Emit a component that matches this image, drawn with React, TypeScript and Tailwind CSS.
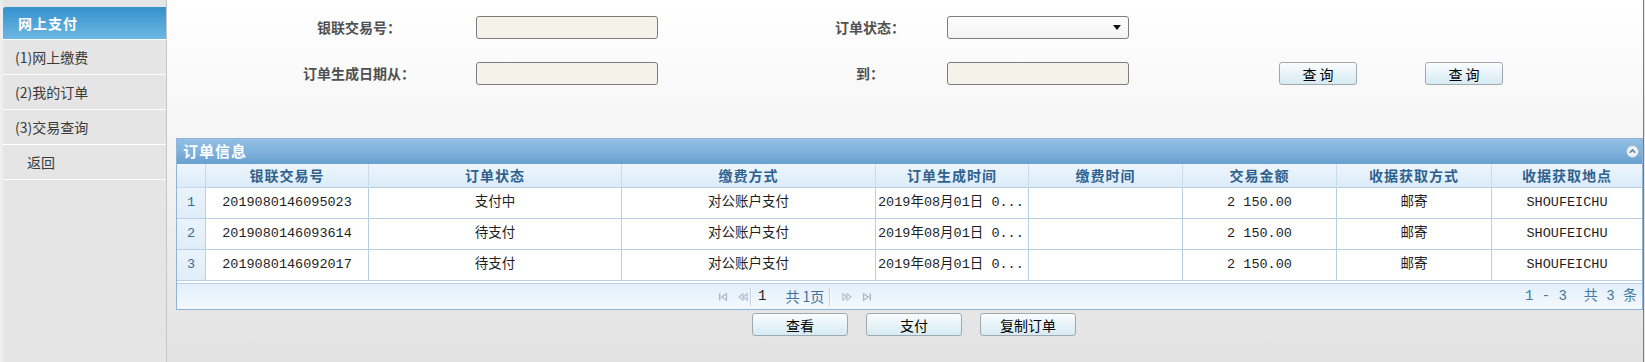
import React from "react";

const cols = [
  "银联交易号",
  "订单状态",
  "缴费方式",
  "订单生成时间",
  "缴费时间",
  "交易金额",
  "收据获取方式",
  "收据获取地点",
];

const rows = [
  { no: "2019080146095023", status: "支付中" },
  { no: "2019080146093614", status: "待支付" },
  { no: "2019080146092017", status: "待支付" },
];

const PagerIcon: React.FC<{ kind: "first" | "prev" | "next" | "last" }> = ({ kind }) => {
  const flip = kind === "next" || kind === "last";
  return (
    <svg width="10" height="8" viewBox="0 0 10 8" className={flip ? "-scale-x-100" : ""}>
      {kind === "first" || kind === "last" ? (
        <>
          <rect x="1" y="0.5" width="1.4" height="7" fill="#a9b6c2" />
          <path d="M8.5 0.8 L3.6 4 L8.5 7.2 Z" fill="none" stroke="#a9b6c2" strokeWidth="1.2" />
        </>
      ) : (
        <>
          <path d="M5 0.8 L1 4 L5 7.2 Z" fill="none" stroke="#b3bfca" strokeWidth="1.1" />
          <path d="M9.2 0.8 L5.2 4 L9.2 7.2 Z" fill="none" stroke="#b3bfca" strokeWidth="1.1" />
        </>
      )}
    </svg>
  );
};

const Sep = () => <div className="w-[2px] h-[18px] border-l border-[#c3d2df] bg-white/70" />;

const Btn: React.FC<{ children: React.ReactNode; className?: string }> = ({ children, className }) => (
  <button
    className={`h-[23px] border border-[#a2a9ad] rounded-[3px] bg-gradient-to-b from-[#f9fdff] to-[#d6eaf3] text-[14px] leading-none text-black ${className ?? ""}`}
  >
    {children}
  </button>
);

export default function App() {
  return (
    <div className="flex w-[1645px] h-[362px] overflow-hidden bg-[#e4e4e4] font-['Noto_Sans_CJK_SC',sans-serif]">
      {/* sidebar */}
      <aside className="w-[167px] shrink-0 h-full bg-[#e5e5e5] border-l-[3px] border-l-[#eeeeee] border-r border-r-[#c6c6c6] pt-[7px]">
        <div className="h-[33px] rounded-tl-[3px] border-b border-white bg-gradient-to-b from-[#3391cc] to-[#6cb7e3] pl-[15px] flex items-center text-[14px] font-bold tracking-[1px] text-white">
          网上支付
        </div>
        {["(1)网上缴费", "(2)我的订单", "(3)交易查询"].map((t) => (
          <div key={t} className="h-[35px] border-b border-white flex items-center pl-[12px] text-[14px] text-[#3a3a3a]">
            {t}
          </div>
        ))}
        <div className="h-[35px] border-b border-white flex items-center pl-[24px] text-[14px] text-[#3a3a3a]">返回</div>
      </aside>

      {/* main */}
      <main className="w-[1477px] shrink-0 h-full border-r border-r-[#4f86bd] bg-gradient-to-b from-white via-[#f2f2f2] to-[#e2e2e2]">
        <div className="h-[138px] pt-[16px] text-[14px]">
          <div className="flex items-center h-[23px]">
            <div className="ml-[112px] w-[160px] text-center font-bold text-[#505050]">银联交易号：</div>
            <input readOnly className="ml-[37px] w-[182px] h-[23px] border border-[#7d7d7d] rounded-[3px] bg-[#f4f3ea]" />
            <div className="ml-[142px] w-[140px] text-center font-bold text-[#505050]">订单状态：</div>
            <div className="ml-[7px] w-[182px] h-[23px] border border-[#7d7d7d] rounded-[3px] bg-gradient-to-b from-white to-[#f3f3f3] flex items-center justify-end pr-[7px]">
              <svg width="8" height="5" viewBox="0 0 8 5">
                <path d="M0 0 H8 L4 5 Z" fill="#111" />
              </svg>
            </div>
          </div>
          <div className="flex items-center h-[23px] mt-[23px]">
            <div className="ml-[112px] w-[160px] text-center font-bold text-[#505050]">订单生成日期从：</div>
            <input readOnly className="ml-[37px] w-[182px] h-[23px] border border-[#7d7d7d] rounded-[3px] bg-[#f4f3ea]" />
            <div className="ml-[142px] w-[140px] text-center font-bold text-[#505050]">到：</div>
            <input readOnly className="ml-[7px] w-[182px] h-[23px] border border-[#7d7d7d] rounded-[3px] bg-[#f4f3ea]" />
            <Btn className="ml-[150px] w-[78px]">查 询</Btn>
            <Btn className="ml-[68px] w-[78px]">查 询</Btn>
          </div>
        </div>

        {/* grid panel */}
        <div className="ml-[9px] w-[1467px] border border-[#8fb4d7] bg-white">
          <div className="h-[25px] flex items-center justify-between pl-[6px] pr-[3px] bg-gradient-to-b from-[#93c0e3] via-[#7eb1dc] to-[#6aa0cf]">
            <span className="text-[15px] font-bold tracking-[1px] text-white">订单信息</span>
            <svg width="13" height="13" viewBox="0 0 13 13">
              <circle cx="6.5" cy="6.5" r="6" fill="#eef3f8" stroke="#9bb8d3" strokeWidth="0.8" />
              <path d="M3.8 7.8 L6.5 5 L9.2 7.8" fill="none" stroke="#5f7f9e" strokeWidth="1.6" />
            </svg>
          </div>
          <div className="grid grid-cols-[29px_163px_253px_254px_153px_154px_154px_155px_150px]">
            <div className="h-[24px] border-r border-b border-[#c3d8ec] bg-gradient-to-b from-[#eef6fd] to-[#dbebf8]" />
            {cols.map((c, i) => (
              <div
                key={c}
                className={`h-[24px] flex items-center justify-center border-b border-[#b7cfe5] bg-gradient-to-b from-[#eef6fd] to-[#dbebf8] text-[14px] font-bold tracking-[1px] text-[#2f618f] ${i < cols.length - 1 ? "border-r border-r-[#c9dcee]" : ""}`}
              >
                {c}
              </div>
            ))}
            {rows.map((r, i) => {
              const cell = "h-[31px] flex items-center border-b border-[#b9cfe3] text-[13.5px] text-[#1e1e1e] font-['Liberation_Mono','Noto_Sans_CJK_SC',monospace]";
              return (
                <React.Fragment key={r.no}>
                  <div className={`${cell} justify-center border-r bg-gradient-to-b from-[#eaf3fb] to-[#e0edf8] text-[#3b6c9a]`}>{i + 1}</div>
                  <div className={`${cell} justify-center border-r`}>{r.no}</div>
                  <div className={`${cell} justify-center border-r`}>{r.status}</div>
                  <div className={`${cell} justify-center border-r`}>对公账户支付</div>
                  <div className={`${cell} pl-[2px] border-r whitespace-nowrap`}>2019年08月01日 0...</div>
                  <div className={`${cell} border-r`} />
                  <div className={`${cell} justify-center border-r`}>2 150.00</div>
                  <div className={`${cell} justify-center border-r`}>邮寄</div>
                  <div className={`${cell} justify-center`}>SHOUFEICHU</div>
                </React.Fragment>
              );
            })}
          </div>
          <div className="h-[2px] bg-white" />
          <div className="h-[26px] flex items-center border-t border-[#b9d0e5] bg-gradient-to-b from-[#e2effb] to-[#f4f9fe] text-[14px]">
            <div className="ml-[541px] flex items-center gap-[10px]">
              <PagerIcon kind="first" />
              <PagerIcon kind="prev" />
            </div>
            <div className="ml-[2px]">
              <Sep />
            </div>
            <span className="ml-[6px] text-[#222] font-['Liberation_Mono',monospace]">1</span>
            <span className="ml-[19px] text-[#3e6f9c]">共 1页</span>
            <div className="ml-[5px]">
              <Sep />
            </div>
            <div className="ml-[11px] flex items-center gap-[10px]">
              <PagerIcon kind="next" />
              <PagerIcon kind="last" />
            </div>
            <span className="ml-auto pr-[5px] text-[#4577a3] whitespace-pre font-['Liberation_Mono','Noto_Sans_CJK_SC',monospace]">1 - 3  共 3 条</span>
          </div>
        </div>

        <div className="flex gap-[18px] pl-[585px] mt-[3px]">
          <Btn className="w-[96px]">查看</Btn>
          <Btn className="w-[96px]">支付</Btn>
          <Btn className="w-[96px]">复制订单</Btn>
        </div>
      </main>
    </div>
  );
}
